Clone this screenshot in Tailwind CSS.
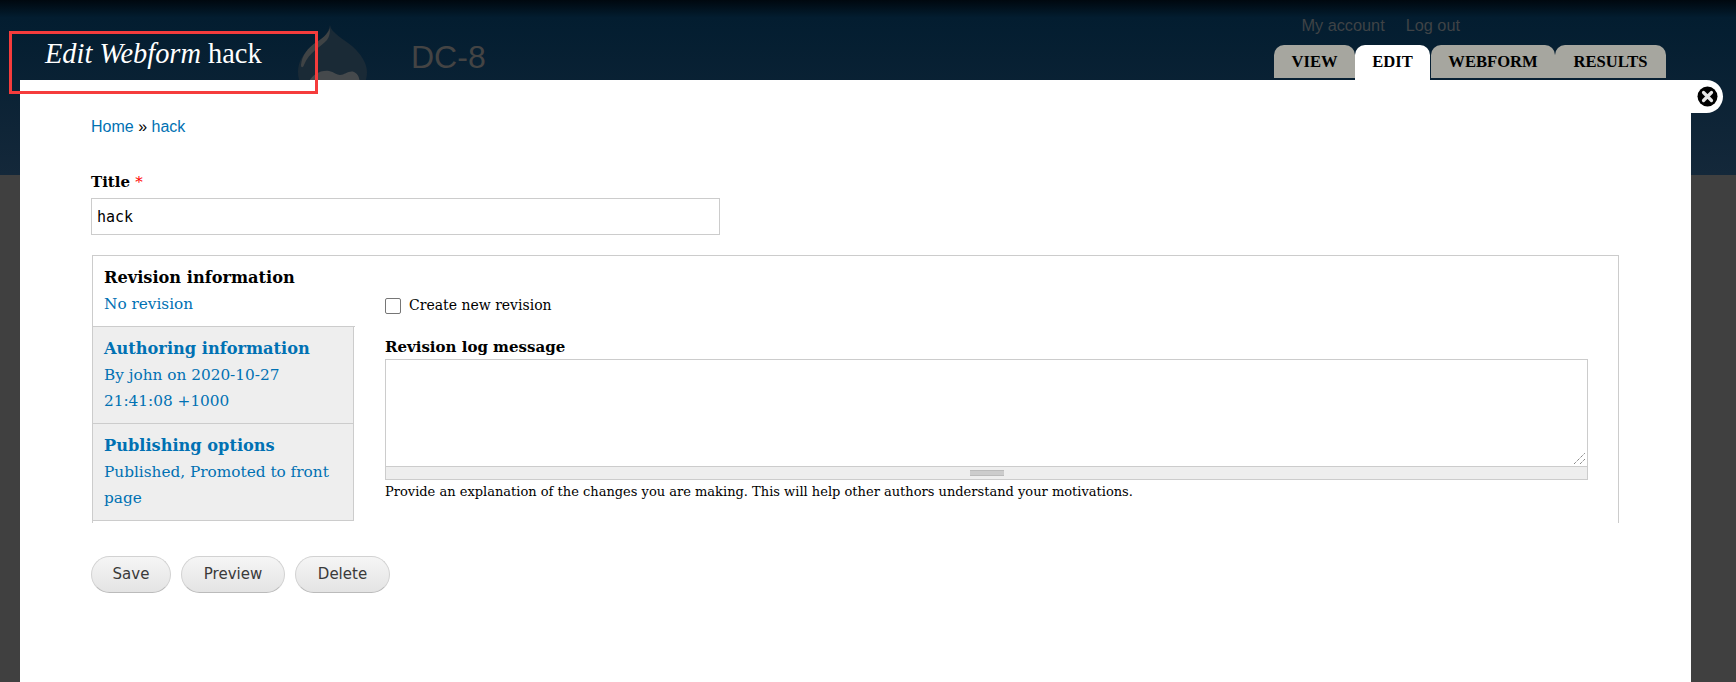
<!DOCTYPE html>
<html lang="en">
<head>
  <meta charset="UTF-8">
  <title>Edit Webform hack | DC-8</title>
  <script src="https://cdn.jsdelivr.net/npm/@tailwindcss/browser@4"></script>
</head>
<body class="bg-[#404040] font-['DejaVu_Serif',serif] text-black">
  <div class="relative h-[682px] overflow-hidden">

    <!-- site header, sits behind the overlay -->
    <header class="h-[175px] bg-gradient-to-b from-[#00080f] from-0% via-[#031d30] via-[10%] to-[#14283a] flex justify-between">
      <div class="flex items-start pl-[298px] pt-[25px]">
        <svg class="w-[70px] h-[80px]" viewBox="0 0 70 80">
          <path d="M32 0c1 8 14 14 22 21 9 8 15 17 15 26 0 18-15 33-34 33S0 65 0 47c0-11 6-20 15-26 8-6 15-11 17-21z" fill="#1a2a36"/>
          <path d="M32 3c0 6-1 9-3 12-6 7-18 12-23 25-1 3-3 3-3 0 1-10 7-17 14-22 7-4 13-9 15-15z" fill="#3f4345"/>
          <path d="M10 58c4-8 12-13 21-12 5 1 8 4 11 4 5 0 9-5 14-3 5 2 6 8 6 14H10z" fill="#45494c"/>
        </svg>
        <div class="ml-[43px] mt-[13px] font-['Liberation_Sans',sans-serif] text-[32px] leading-[38px] text-[#444]">DC-8</div>
      </div>
      <div class="flex flex-col items-end pr-[70px]">
        <nav class="flex gap-[21px] pt-[15px] pr-[206px] font-['Liberation_Sans',sans-serif] text-[16.3px] leading-[20px] text-[#3f4346]">
          <a>My account</a>
          <a>Log out</a>
        </nav>
        <ul class="flex items-start mt-[10px] font-bold font-['Liberation_Serif',serif] text-[16.6px] leading-[33px]">
          <li class="w-[81px] h-[33px] text-center rounded-t-[10px] bg-[#a6a69f]">VIEW</li>
          <li class="w-[75px] h-[35px] mr-[1px] text-center rounded-t-[10px] bg-white">EDIT</li>
          <li class="w-[124px] h-[33px] text-center rounded-t-[10px] bg-[#a6a69f]">WEBFORM</li>
          <li class="w-[111px] h-[33px] text-center rounded-t-[10px] bg-[#a6a69f]">RESULTS</li>
        </ul>
      </div>
    </header>

    <!-- overlay -->
    <div class="absolute left-[20px] top-[80px] right-[45px] bottom-0 bg-white pl-[71px] pt-[37px]">
      <a class="absolute right-[-32px] top-0 w-[48px] h-[33px] rounded-r-[17px] bg-white flex items-center justify-center pl-[16px]">
        <svg class="w-[21px] h-[21px]" viewBox="0 0 21 21">
          <circle cx="10.5" cy="10.5" r="10" fill="#000"/>
          <path d="M6.5 6.5l8 8M14.5 6.5l-8 8" stroke="#e8e8e8" stroke-width="3.2" stroke-linecap="round"/>
        </svg>
      </a>

      <div class="font-['Liberation_Sans',sans-serif] text-[16px] leading-[20px]">
        <a class="text-[#0071b3]">Home</a> » <a class="text-[#0071b3]">hack</a>
      </div>

      <label class="block mt-[35px] font-bold text-[15px] leading-[20px]">Title <span class="text-[#f00] font-normal">*</span></label>
      <div class="mt-[6px] w-[629px] h-[37px] border border-[#ccc] px-[5px] font-['DejaVu_Sans_Mono',monospace] text-[15px] leading-[36px]">hack</div>

      <!-- vertical tabs -->
      <div class="relative mt-[20px] ml-[1px] w-[1527px] h-[268px] border-t border-x border-[#ccc] flex">
        <ul class="w-[262px] shrink-0 text-[15.3px] leading-[26px] text-[#0071b3] -ml-px">
          <li class="h-[71px] pt-[9px] pl-[12px] border-b border-[#ccc] -mr-px">
            <strong class="block text-black text-[16.2px]">Revision information</strong>
            No revision
          </li>
          <li class="h-[97px] pt-[9px] pl-[11px] pr-[8px] bg-[#eee] border-x border-b border-[#ccc]">
            <strong class="block text-[16.2px]">Authoring information</strong>
            By john on 2020-10-27 21:41:08 +1000
          </li>
          <li class="h-[97px] pt-[9px] pl-[11px] pr-[8px] bg-[#eee] border-x border-b border-[#ccc]">
            <strong class="block text-[16.2px]">Publishing options</strong>
            Published, Promoted to front page
          </li>
        </ul>
        <div class="flex-1 pl-[31px] pr-[30px] pt-[39px]">
          <label class="flex items-center h-[20px]">
            <span class="w-[16px] h-[16px] rounded-[2px] border border-[#767676] bg-white mt-[2px]"></span>
            <span class="ml-[8px] text-[14px]">Create new revision</span>
          </label>
          <label class="block mt-[22px] font-bold text-[15px] leading-[20px]">Revision log message</label>
          <div class="relative mt-[2px] h-[108px] border border-[#ccc] bg-white">
            <svg class="absolute right-[1px] bottom-[1px] w-[13px] h-[13px]" viewBox="0 0 13 13">
              <path d="M1 12L12 1M7 12l5-5" stroke="#555" stroke-width="1" stroke-dasharray="1 1"/>
            </svg>
          </div>
          <div class="h-[13px] bg-[#eee] border-x border-b border-[#ccc] flex justify-center pt-[3px]">
            <div class="w-[34px] h-[6px] bg-[#ccc] border-y border-[#bbb]"></div>
          </div>
          <p class="mt-[2px] text-[13px] leading-[20px]">Provide an explanation of the changes you are making. This will help other authors understand your motivations.</p>
        </div>
      </div>

      <div class="flex gap-[10px] mt-[33px] font-['DejaVu_Sans',sans-serif] text-[15px] text-[#3a3a3a]">
        <button class="w-[80px] h-[37px] rounded-full border border-[#d2d2d2] border-b-[#bbb] bg-gradient-to-b from-[#f5f5f5] to-[#e4e4e4]">Save</button>
        <button class="w-[104px] h-[37px] rounded-full border border-[#d2d2d2] border-b-[#bbb] bg-gradient-to-b from-[#f5f5f5] to-[#e4e4e4]">Preview</button>
        <button class="w-[95px] h-[37px] rounded-full border border-[#d2d2d2] border-b-[#bbb] bg-gradient-to-b from-[#f5f5f5] to-[#e4e4e4]">Delete</button>
      </div>
    </div>

    <!-- page title over the overlay edge -->
    <h1 class="absolute left-[45px] top-[38px] text-white font-['Liberation_Serif',serif] text-[28.4px] leading-[32px]"><em>Edit Webform</em> hack</h1>

    <!-- red annotation box -->
    <div class="absolute left-[9px] top-[31px] w-[309px] h-[63px] border-[3px] border-[#f53c3c]"></div>
  </div>
</body>
</html>
